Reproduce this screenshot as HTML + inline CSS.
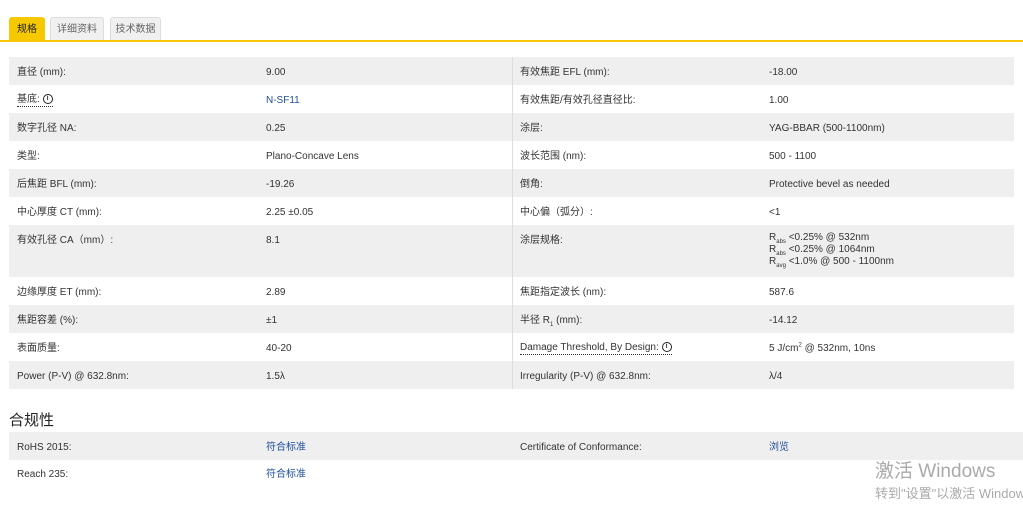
<!DOCTYPE html><html><head><meta charset="utf-8"><style>
body{margin:0;width:1023px;height:507px;background:#fff;font-family:"Liberation Sans","Noto Sans CJK SC",sans-serif;font-size:10px;color:#333;position:relative;overflow:hidden}
sub,sup{line-height:0;font-size:6px}
.a{position:absolute;white-space:nowrap}
.tab{position:absolute;top:17px;height:24px;line-height:24px;text-align:center;font-size:10px;color:#666;background:#f0f0f0;border:1px solid #ddd;border-bottom:none;border-radius:3px 3px 0 0;box-sizing:border-box}
.r{position:absolute;left:9px;width:1005px;height:28px}
.g{background:#efefef}
.t{position:absolute;line-height:28px;white-space:nowrap}
.l{color:#1f4e9a}
.u{border-bottom:1px dotted #333;line-height:13px}
.i{display:inline-block;width:8px;height:8px;border:1.2px solid #222;border-radius:50%;font-size:7px;line-height:8px;text-align:center;font-weight:bold;vertical-align:middle}
</style></head><body>
<div class="tab" style="left:9px;width:36px;background:#f5c800;border-color:#f5c800;color:#222">规格</div>
<div class="tab" style="left:50px;width:54px">详细资料</div>
<div class="tab" style="left:110px;width:51px">技术数据</div>
<div class="a" style="left:0;top:40px;width:1023px;height:2px;background:#f5c800"></div>

<div class="r g" style="top:57px"></div>
<div class="r g" style="top:113px"></div>
<div class="r g" style="top:169px"></div>
<div class="r g" style="top:225px;height:52px"></div>
<div class="r g" style="top:305px"></div>
<div class="r g" style="top:361px"></div>
<div class="a" style="left:512px;top:57px;width:1px;height:332px;background:#ddd"></div>

<div style="position:absolute;left:17px;top:59px">
<div class="t" style="top:0">直径 (mm):</div>
<div class="t u" style="top:34px">基底: <span class="i">i</span></div>
<div class="t" style="top:56px">数字孔径 NA:</div>
<div class="t" style="top:84px">类型:</div>
<div class="t" style="top:112px">后焦距 BFL (mm):</div>
<div class="t" style="top:140px">中心厚度 CT (mm):</div>
<div class="t" style="top:168px">有效孔径 CA（mm）:</div>
<div class="t" style="top:220px">边缘厚度 ET (mm):</div>
<div class="t" style="top:248px">焦距容差 (%):</div>
<div class="t" style="top:276px">表面质量:</div>
<div class="t" style="top:304px">Power (P-V) @ 632.8nm:</div>
</div>
<div style="position:absolute;left:266px;top:59px">
<div class="t" style="top:0">9.00</div>
<div class="t l" style="top:28px">N-SF11</div>
<div class="t" style="top:56px">0.25</div>
<div class="t" style="top:84px">Plano-Concave Lens</div>
<div class="t" style="top:112px">-19.26</div>
<div class="t" style="top:140px">2.25 ±0.05</div>
<div class="t" style="top:168px">8.1</div>
<div class="t" style="top:220px">2.89</div>
<div class="t" style="top:248px">±1</div>
<div class="t" style="top:276px">40-20</div>
<div class="t" style="top:304px">1.5λ</div>
</div>
<div style="position:absolute;left:520px;top:59px">
<div class="t" style="top:0">有效焦距 EFL (mm):</div>
<div class="t" style="top:28px">有效焦距/有效孔径直径比:</div>
<div class="t" style="top:56px">涂层:</div>
<div class="t" style="top:84px">波长范围 (nm):</div>
<div class="t" style="top:112px">倒角:</div>
<div class="t" style="top:140px">中心偏（弧分）:</div>
<div class="t" style="top:168px">涂层规格:</div>
<div class="t" style="top:220px">焦距指定波长 (nm):</div>
<div class="t" style="top:248px">半径 R<sub>1</sub> (mm):</div>
<div class="t u" style="top:282px">Damage Threshold, By Design: <span class="i">i</span></div>
<div class="t" style="top:304px">Irregularity (P-V) @ 632.8nm:</div>
</div>
<div style="position:absolute;left:769px;top:59px">
<div class="t" style="top:0">-18.00</div>
<div class="t" style="top:28px">1.00</div>
<div class="t" style="top:56px">YAG-BBAR (500-1100nm)</div>
<div class="t" style="top:84px">500 - 1100</div>
<div class="t" style="top:112px">Protective bevel as needed</div>
<div class="t" style="top:140px">&lt;1</div>
<div class="t" style="top:173px;line-height:12px">R<sub>abs</sub> &lt;0.25% @ 532nm<br>R<sub>abs</sub> &lt;0.25% @ 1064nm<br>R<sub>avg</sub> &lt;1.0% @ 500 - 1100nm</div>
<div class="t" style="top:220px">587.6</div>
<div class="t" style="top:248px">-14.12</div>
<div class="t" style="top:276px">5 J/cm<sup>2</sup> @ 532nm, 10ns</div>
<div class="t" style="top:304px">λ/4</div>
</div>

<div class="a" style="left:9px;top:409px;font-size:15px;color:#222">合规性</div>
<div class="r g" style="top:432px;width:1014px"></div>
<div class="t" style="left:17px;top:434px">RoHS 2015:</div>
<div class="t l" style="left:266px;top:434px">符合标准</div>
<div class="t" style="left:520px;top:434px">Certificate of Conformance:</div>
<div class="t l" style="left:769px;top:434px">浏览</div>
<div class="t" style="left:17px;top:461px">Reach 235:</div>
<div class="t l" style="left:266px;top:461px">符合标准</div>
<div class="a" style="left:875px;top:456px;font-size:19px;color:#aaa">激活 Windows</div>
<div class="a" style="left:875px;top:483px;font-size:13px;color:#aaa">转到"设置"以激活 Windows。</div>
</body></html>
